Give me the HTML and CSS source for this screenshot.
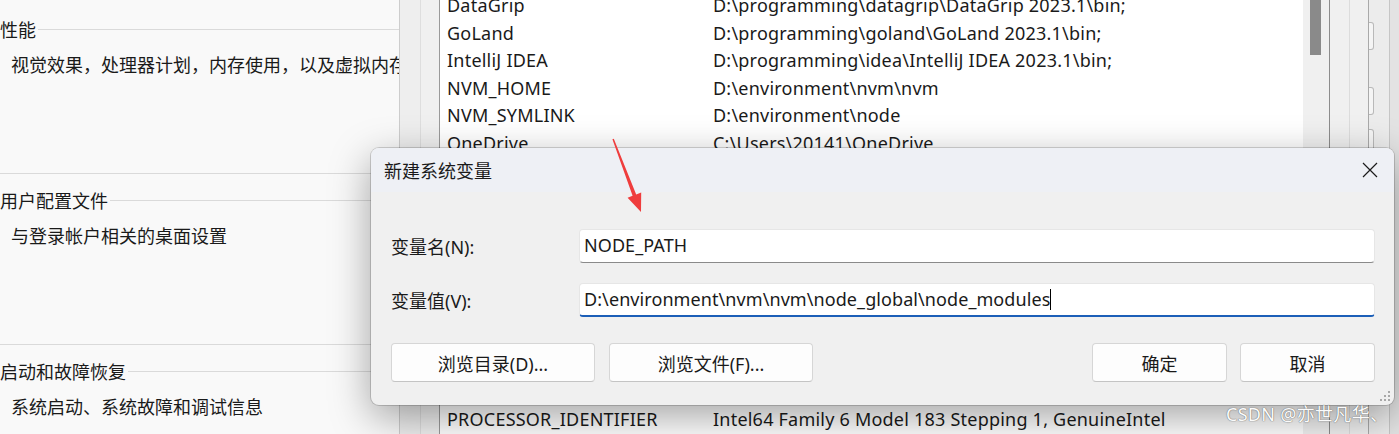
FILE: index.html
```html
<!DOCTYPE html>
<html>
  <head>
    <title>新建系统变量</title>
    <link rel="stylesheet" href="styles.css">
  </head>
  <body>
    <div class="screen">
      <div class="sysprops">
        <div class="group">
          <div class="group-title">性能</div>
          <div class="group-desc">视觉效果，处理器计划，内存使用，以及虚拟内存</div>
        </div>
        <div class="group">
          <div class="group-title">用户配置文件</div>
          <div class="group-desc">与登录帐户相关的桌面设置</div>
        </div>
        <div class="group">
          <div class="group-title">启动和故障恢复</div>
          <div class="group-desc">系统启动、系统故障和调试信息</div>
        </div>
      </div>

      <div class="envwin">
        <div class="env-edge"><span></span><span></span></div>
        <div class="varlist">
          <ul class="rows">
            <li><span class="name">DataGrip</span><span class="value">D:\programming\datagrip\DataGrip 2023.1\bin;</span></li>
            <li><span class="name">GoLand</span><span class="value">D:\programming\goland\GoLand 2023.1\bin;</span></li>
            <li><span class="name">IntelliJ IDEA</span><span class="value">D:\programming\idea\IntelliJ IDEA 2023.1\bin;</span></li>
            <li><span class="name">NVM_HOME</span><span class="value">D:\environment\nvm\nvm</span></li>
            <li><span class="name">NVM_SYMLINK</span><span class="value">D:\environment\node</span></li>
            <li><span class="name">OneDrive</span><span class="value">C:\Users\20141\OneDrive</span></li>
            <li><span class="name">OS</span><span class="value">Windows_NT</span></li>
            <li><span class="name">Path</span><span class="value">C:\Windows\system32;C:\Windows;</span></li>
            <li><span class="name">PATHEXT</span><span class="value">.COM;.EXE;.BAT;.CMD;.VBS;.VBE;.JS</span></li>
            <li><span class="name">PhpStorm</span><span class="value">D:\programming\phpstorm\bin;</span></li>
            <li><span class="name">PROCESSOR_ARCHITECTURE</span><span class="value">AMD64</span></li>
            <li><span class="name">PyCharm</span><span class="value">D:\programming\pycharm\bin;</span></li>
            <li><span class="name">TEMP</span><span class="value">C:\Windows\TEMP</span></li>
            <li><span class="name">TMP</span><span class="value">C:\Windows\TEMP</span></li>
            <li><span class="name">USERNAME</span><span class="value">SYSTEM</span></li>
            <li><span class="name">PROCESSOR_IDENTIFIER</span><span class="value">Intel64 Family 6 Model 183 Stepping 1, GenuineIntel</span></li>
          </ul>
          <div class="scrollbar"><div class="thumb"></div></div>
        </div>
        <div class="env-side">
          <div class="side-a"></div>
          <div class="side-b"></div>
          <div class="side-c">
            <i class="btn-edge e1"></i>
            <i class="btn-edge e2"></i>
            <i class="btn-edge e3"></i>
          </div>
          <div class="side-d"></div>
        </div>
      </div>
    </div>

    <div class="dialog">
      <div class="dialog-title">
        <span>新建系统变量</span>
        <svg class="close" width="16" height="16" viewBox="0 0 16 16"><path d="M1 1L15 15M15 1L1 15" stroke="#1b1b1b" stroke-width="1.2" fill="none"/></svg>
      </div>
      <div class="dialog-body">
        <div class="field">
          <label>变量名(N):</label>
          <div class="textbox">NODE_PATH</div>
        </div>
        <div class="field second">
          <label>变量值(V):</label>
          <div class="textbox focused">D:\environment\nvm\nvm\node_global\node_modules<span class="caret"></span></div>
        </div>
        <div class="buttons">
          <div class="btn wide">浏览目录(D)...</div>
          <div class="btn wide">浏览文件(F)...</div>
          <div class="spacer"></div>
          <div class="btn">确定</div>
          <div class="btn">取消</div>
        </div>
      </div>
      <svg class="grip" width="10" height="10" viewBox="0 0 10 10">
        <rect x="8" y="0" width="2" height="2" fill="#a8a8a8"/>
        <rect x="4" y="4" width="2" height="2" fill="#a8a8a8"/>
        <rect x="8" y="4" width="2" height="2" fill="#a8a8a8"/>
        <rect x="0" y="8" width="2" height="2" fill="#a8a8a8"/>
        <rect x="4" y="8" width="2" height="2" fill="#a8a8a8"/>
        <rect x="8" y="8" width="2" height="2" fill="#a8a8a8"/>
      </svg>
    </div>

    <svg class="arrow" width="60" height="85" viewBox="600 135 60 85">
      <polygon points="612.4,139.3 613.8,138.7 636.2,194.4 641.2,192.4 641,212 627.6,197.8 632.6,195.8" fill="#ef3d3d"/>
    </svg>

    <div class="watermark">CSDN @亦世凡华、</div>
  </body>
</html>
```

FILE: styles.css
```css
* { box-sizing: border-box; }
body { margin: 0; width: 1399px; height: 434px; overflow: hidden; position: relative; font-family: "Noto Sans", "Noto Sans CJK SC", sans-serif; font-size: 18px; color: #1a1a1a; background: #f0f0f0; }

.screen { display: flex; height: 434px; }

/* left: system properties, advanced tab */
.sysprops { width: 400px; flex: none; background: #f9f9f9; border-right: 1px solid #cdcdcd; padding-top: 18px; overflow: hidden; font-family: "Noto Sans CJK SC", sans-serif; }
.group { height: 156px; border-bottom: 1px solid #dadada; margin-bottom: 15px; }
.group-title { display: flex; align-items: center; height: 22px; white-space: nowrap; }
.group-title::after { content: ""; flex: 1; height: 1px; background: #dadada; margin-left: 2px; }
.group-desc { margin: 12px 0 0 11px; line-height: 24px; white-space: nowrap; }

/* right: environment variables window */
.envwin { flex: 1; display: flex; background: #f0f0f0; }
.env-edge { width: 39px; display: flex; }
.env-edge span:first-child { width: 21px; border-right: 1px solid #dedede; background: #eeeeee; }
.env-edge span:last-child { flex: 1; }
.varlist { width: 891px; display: flex; background: #fff; border-left: 1px solid #9a9a9a; border-right: 1px solid #8c8c8c; overflow: hidden; }
.rows { list-style: none; margin: -8px 0 0; padding: 0 0 0 7px; flex: 1; letter-spacing: 0.22px; }
.rows li { display: flex; height: 27.6px; line-height: 27.6px; white-space: nowrap; }
.rows .name { width: 266px; flex: none; }
.scrollbar { width: 26px; background: #f0f0f0; }
.thumb { width: 11px; height: 55px; margin-left: 7px; background: #8a8a8a; }

.env-side { flex: 1; display: flex; }
.side-a { width: 20px; border-right: 1px solid #dcdcdc; }
.side-b { width: 19px; border-right: 1px solid #a9a9a9; }
.side-c { width: 21px; background: #ececec; border-right: 1px solid #c6c6c6; position: relative; }
.side-d { flex: 1; background: #e3e3e3; }
.btn-edge { position: absolute; left: 0; width: 5px; border: 1px solid #b9b9b9; border-left: none; border-radius: 0 3px 3px 0; background: #f5f5f5; }
.e1 { top: 22px; height: 28px; }
.e2 { top: 87px; height: 28px; }
.e3 { top: 129px; height: 28px; }

/* dialog */
.dialog { position: absolute; left: 371px; top: 148px; width: 1023px; height: 257px; background: #f0f0f0; border-radius: 8px; overflow: hidden; box-shadow: 0 0 0 1px rgba(0, 0, 0, 0.16), 0 12px 40px rgba(0, 0, 0, 0.36); font-family: "Noto Sans", "Noto Sans CJK SC", sans-serif; }
.dialog-title { height: 44px; background: #eef0f5; display: flex; align-items: center; justify-content: space-between; padding: 0 16px 0 13px; font-family: "Noto Sans CJK SC", sans-serif; }
.dialog-body { padding: 37px 19px 0 20px; }
.field { display: grid; grid-template-columns: 188px 1fr; align-items: center; }
.field.second { margin-top: 20px; }
.textbox { height: 34px; background: #fff; border: 1px solid #e6e6e6; border-bottom-color: #8a8a8a; border-radius: 4px; padding: 0 4px; line-height: 30px; white-space: nowrap; letter-spacing: 0.08px; }
.textbox.focused { border-bottom: 2px solid #1c5fb8; }
.caret { display: inline-block; width: 1px; height: 21px; background: #000; vertical-align: -4px; }
.buttons { display: flex; margin-top: 26px; gap: 13px; }
.spacer { flex: 1; }
.btn { width: 135px; height: 39px; background: #fdfdfd; border: 1px solid #d6d6d6; border-bottom-color: #c4c4c4; border-radius: 4px; display: flex; align-items: center; justify-content: center; }
.btn.wide { width: 204px; margin-right: 1px; }
.grip { position: absolute; right: 4px; bottom: 4px; }

.arrow { position: absolute; left: 600px; top: 135px; }

.watermark { position: absolute; left: 1226px; top: 400px; font-family: "Noto Sans", "Noto Sans CJK SC", sans-serif; font-size: 18px; letter-spacing: 0.3px; color: #fbfbfb; text-shadow: 0 0 1px #6f6f6f, 0 0 1px #6f6f6f; }
```
